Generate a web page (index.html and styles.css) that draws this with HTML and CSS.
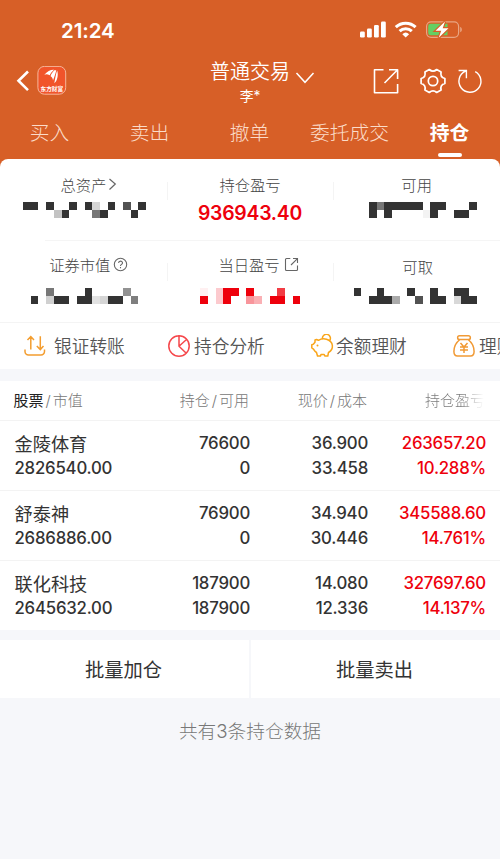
FILE: index.html
```html
<!DOCTYPE html>
<html lang="zh-CN">
<head>
<meta charset="utf-8">
<meta name="viewport" content="width=device-width, initial-scale=1">
<title>普通交易</title>
<link rel="stylesheet" href="styles.css">
</head>
<body>
<header class="header">
  <div class="status">
    <span class="clock">21:24</span>
    <svg class="status-icons" width="104" height="20" viewBox="0 0 104 20">
      <g fill="#fff">
        <rect x="0" y="11.5" width="4.8" height="6" rx="1.2"/><rect x="7" y="8.5" width="4.8" height="9" rx="1.2"/>
        <rect x="14" y="5" width="4.8" height="12.5" rx="1.2"/><rect x="21" y="1.5" width="4.8" height="16" rx="1.2"/>
      </g>
      <g fill="none" stroke="#fff" stroke-width="3">
        <path d="M35.8 7.2a14.2 14.2 0 0 1 19.8 0"/><path d="M39.6 11.1a8.8 8.8 0 0 1 12.2 0"/>
      </g>
      <path d="M42.3 14.2a5 5 0 0 1 6.800 0L45.700 17.500z" fill="#fff"/>
      <rect x="66.600" y="1.800" width="32" height="15.500" rx="4.500" fill="none" stroke="#e9a583" stroke-width="1.200"/>
      <path d="M100.200 7v5.200c2.200-.6 2.200-4.600 0-5.200z" fill="#e9a583"/>
      <path d="M70.500 3.800H87.500V15.200H70.500a2.300 2.300 0 0 1-2.300-2.300V6.100a2.300 2.300 0 0 1 2.300-2.300z" fill="#65cf63"/>
      <path d="M85 1.500 75.500 10.800h5.700L78.700 17.800 88.500 8.200h-5.800z" fill="#fff" stroke="#d75f27" stroke-width="2.400" paint-order="stroke"/>
    </svg>
  </div>
  <div class="nav">
    <svg class="back" width="14" height="24" viewBox="0 0 14 24"><path d="M12 2.500 2.500 11.800 12 21.100" fill="none" stroke="#fff" stroke-width="2.600"/></svg>
    <svg class="logo" width="30" height="30" viewBox="0 0 30 30">
      <rect x=".9" y=".4" width="27.800" height="27.800" rx="6.500" fill="#f1542a" stroke="#f6b79b" stroke-width="1"/>
      <path d="M7.300 8.800C10 5.400 14 3.400 17 3.700 15 5.600 13.300 7.500 12.700 9.300 10.500 8 8.600 8.200 7.300 8.800z" fill="#fff"/>
      <path d="M17.800 4C15.500 6 13.800 8.300 13.600 10.300 15 11.300 16 12.700 16 14.400 17.500 11 18.400 7 19.300 4.400z" fill="#fff"/>
      <path d="M20.200 4.500C18.800 8 18.200 12.500 17.300 17.300 20 15.200 21.700 9.600 20.200 4.500z" fill="#fff"/>
      <text x="14.800" y="24.700" text-anchor="middle" class="logo-text">东方财富</text>
    </svg>
    <div class="title"><div class="title-main">普通交易</div><div class="title-sub">李*</div></div>
    <svg class="chev" width="20" height="14" viewBox="0 0 20 14"><path d="M1.500 2 10 11.300 18.500 2" fill="none" stroke="#fff" stroke-width="1.500"/></svg>
    <svg class="share" width="28" height="28" viewBox="0 0 28 28"><path d="M11.500 2.700H2.500V25.800H25.600V17M17 2.700H25.600V12M25.300 3 12.500 16" fill="none" stroke="#fff" stroke-width="1.600" stroke-linejoin="round"/></svg>
    <svg class="gear" width="28" height="28" viewBox="0 0 28 28"><g fill="none" stroke="#fff" stroke-width="1.700"><circle cx="14" cy="14" r="4.700"/><path d="M10.300 2.500Q14 5.900 17.700 2.500L22.100 5Q20.800 10.200 25.900 11.500V16.500Q20.800 17.800 22.100 23L17.700 25.500Q14 22.100 10.300 25.500L5.900 23Q7.200 17.800 2.100 16.500V11.500Q7.200 10.200 5.900 5Z" stroke-linejoin="round"/></g></svg>
    <svg class="reload" width="26" height="28" viewBox="0 0 26 28"><path d="M18.200 4.600A11 11 0 1 1 8.500 4.200M1.600 3.500H9.400V11.200" fill="none" stroke="#fff" stroke-width="1.400"/></svg>
  </div>
  <nav class="tabs">
    <span class="tab">买入</span><span class="tab">卖出</span><span class="tab">撤单</span><span class="tab">委托成交</span><span class="tab active">持仓</span>
  </nav>
</header>

<section class="summary">
  <div class="stats">
    <div class="stat">
      <div class="label assets">总资产<svg width="9" height="14" viewBox="0 0 9 14"><path d="M1.500 2 7.300 7 1.500 12.500" fill="none" stroke="#666" stroke-width="1.200"/></svg></div>
      <svg class="mosaic" viewBox="0 0 21.667 2" preserveAspectRatio="none" fill="#333"><path d="M3 0h2v1h-2zM6 0h1v1h-1zM8 1h1v1h-1zM9 0h1v1h-1zM11 0h1v1h-1zM13 1h1v1h-1zM14 0h1v1h-1zM17 1h1v1h-1zM18 0h1v1h-1z"/><path fill="#c3c3c3" d="M7 1h1v1h-1z"/><path fill="#d6d6d6" d="M12 0h1v1h-1z"/><path fill="#777" d="M12 1h1v1h-1z"/><path fill="#525252" d="M16 0h1v1h-1z"/></svg>
    </div>
    <div class="stat"><div class="label">持仓盈亏</div><div class="profit">936943.40</div></div>
    <div class="stat"><div class="label">可用</div>
      <svg class="mosaic" viewBox="43.333 0 21.667 2" preserveAspectRatio="none" fill="#333"><path d="M48 0h1v2h-1zM50 0h5v1h-4v1h-1zM56 0h2v1h-1v1h-1zM59 1h2v1h-2zM61 0h1v1h-1z"/><path fill="#777" d="M49 0h1v1h-1z"/><path fill="#f3f3f3" d="M55 1h1v1h-1z"/></svg>
    </div>
  </div>
  <div class="stats second">
    <div class="stat">
      <div class="label value">证券市值<svg class="help" width="15" height="15" viewBox="0 0 15 15"><g fill="none" stroke="#666" stroke-width="1.100"><circle cx="7.500" cy="7.500" r="6.200"/><path d="M5.600 6.100c0-2.600 3.900-2.500 3.900-.2 0 1.500-2 1.500-2 3.100M7.500 10v1.300"/></g></svg></div>
      <svg class="mosaic" viewBox="0 0 21.667 2" preserveAspectRatio="none" fill="#333"><path d="M4 1h1v1h-1zM7 1h2v1h-2zM10 1h1v-1h1v2h-2zM14 1h2v1h-2z"/><path fill="#777" d="M6 0h1v1h-1z"/><path fill="#d0d0d0" d="M6 1h1v1h-1z"/><path fill="#e2e2e2" d="M12 1h1v1h-1z"/><path fill="#d5d5d5" d="M13 1h1v1h-1z"/><path fill="#929292" d="M16 0h1v1h-1z"/><path fill="#7e7e7e" d="M17 1h1v1h-1z"/></svg>
    </div>
    <div class="stat">
      <div class="label today">当日盈亏<svg class="ext" width="15" height="15" viewBox="0 0 15 15"><path d="M6.300 1.500H2.500a1 1 0 0 0-1 1V12.500a1 1 0 0 0 1 1H12.500a1 1 0 0 0 1-1V8.500M9 1.500H13.500V6M13.200 1.800 7 8" fill="none" stroke="#666" stroke-width="1.100"/></svg></div>
      <svg class="mosaic" viewBox="21.667 0 21.667 2" preserveAspectRatio="none" fill="#ee000c"><path d="M26 1h1v1h-1zM29 0h2v1h-1v1h-1zM32 0h1v1h-1zM35 1h2v1h-2zM38 1h1v1h-1z"/><path fill="#fff0f1" d="M26 0h1v1h-1z"/><path fill="#fccace" d="M28 0h1v2h-1z"/><path fill="#f8959b" d="M32 1h1v1h-1z"/><path fill="#fab0b4" d="M33 1h1v1h-1z"/><path fill="#f23c44" d="M36 0h1v1h-1z"/></svg>
    </div>
    <div class="stat"><div class="label low">可取</div>
      <svg class="mosaic" viewBox="43.333 0 21.667 2" preserveAspectRatio="none" fill="#333"><path d="M46 0h1v1h-1zM48 1h1v-1h1v1h1v1h-3zM53 0h1v1h-1zM56 0h1v1h1v1h-2zM59 0h2v1h1v1h-2v-1h-1z"/><path fill="#aaa" d="M51 1h1v1h-1z"/><path fill="#525252" d="M54 1h1v1h-1z"/><path fill="#d8d8d8" d="M59 1h1v1h-1z"/></svg>
    </div>
  </div>
  <div class="tools">
    <div class="tool"><svg width="24" height="24" viewBox="0 0 24 24"><path d="M2 15.500V17.500a3.500 3.500 0 0 0 3.500 3.500H18a3.500 3.500 0 0 0 3.500-3.500V15.500M7.800 15.500V2.800M4.500 6 7.800 2.500 11 6M17.300 2.300V15.300M13.800 12 17.300 15.600 20.500 12" fill="none" stroke="#f39d2f" stroke-width="1.500"/></svg>银证转账</div>
    <div class="tool"><svg width="24" height="24" viewBox="0 0 24 24"><path d="M12 1.800a10.200 10.200 0 1 0 0 20.400 10.200 10.200 0 0 0 0-20.400V12.200L19 19M12 12.200 19.500 5.500" fill="none" stroke="#f5474b" stroke-width="1.500"/></svg>持仓分析</div>
    <div class="tool"><svg width="24" height="24" viewBox="0 0 24 24"><g fill="none" stroke="#f9a51a" stroke-width="1.500" stroke-linejoin="round"><path d="M6.500 5.500 8.500 6.300Q12 4 16.500 5.200C24 7.500 24 15.300 18.500 18.500L17.800 22H14.800L14.200 20.500H11L10.500 22H7.500L6.500 18.500Q4.500 17.200 3.500 15.200L1.800 14V10.800L3.500 10.100 5 8.300V6z"/><path d="M12.500 5.200A4 4 0 1 1 19.500 6.800"/></g><circle cx="7.500" cy="11.500" r="1" fill="#f9a51a"/></svg>余额理财</div>
    <div class="tool"><svg width="24" height="24" viewBox="0 0 24 24"><path d="M7.500 1.800H16.500a1.800 1.800 0 0 1 0 3.700H7.500a1.800 1.800 0 0 1 0-3.700zM8 5.500Q2 10 1.900 17.500 2 22 5.500 22H18.500Q22 22 22.100 17.500 22 10 16 5.500M8.500 9 12 13 15.500 9M12 13V19M8 13H16M8 16H16" fill="none" stroke="#f19a35" stroke-width="1.500"/></svg>理财</div>
  </div>
</section>

<section class="holdings">
  <div class="row head"><div class="first"><b>股票</b><i>/</i>市值</div><div>持仓<i>/</i>可用</div><div>现价<i>/</i>成本</div><div class="fade">持仓盈亏</div></div>
  <div class="row"><div><span class="name">金陵体育</span><span>2826540.00</span></div><div><span>76600</span><span>0</span></div><div><span>36.900</span><span>33.458</span></div><div class="red"><span>263657.20</span><span>10.288%</span></div></div>
  <div class="row"><div><span class="name">舒泰神</span><span>2686886.00</span></div><div><span>76900</span><span>0</span></div><div><span>34.940</span><span>30.446</span></div><div class="red"><span>345588.60</span><span>14.761%</span></div></div>
  <div class="row"><div><span class="name">联化科技</span><span>2645632.00</span></div><div><span>187900</span><span>187900</span></div><div><span>14.080</span><span>12.336</span></div><div class="red"><span>327697.60</span><span>14.137%</span></div></div>
</section>

<div class="actions"><div>批量加仓</div><div>批量卖出</div></div>
<footer class="count">共有3条持仓数据</footer>
</body>
</html>
```
FILE: styles.css
```css
* { box-sizing: border-box; }
body {
  margin: 0;
  width: 500px;
  height: 859px;
  overflow: hidden;
  background: #f6f7fa;
  color: #333;
  font-family: Inter, "Noto Sans CJK SC", sans-serif;
}
svg { display: block; flex: none; }

.header { height: 159px; background: #d75f27; color: #fff; }
.status { display: flex; justify-content: space-between; height: 60px; padding: 20px 36px 0 61px; }
.clock { font-size: 20.5px; line-height: 21px; font-weight: 600; letter-spacing: -.1px; }
.nav { display: flex; align-items: center; height: 41px; padding-left: 16px; }
.logo { margin-left: 7px; }
.logo-text { font: 700 5.6px "Noto Sans CJK SC", sans-serif; fill: #fff; }
.title { width: 80px; margin-left: 143px; text-align: center; }
.title-main { font-size: 20px; line-height: 24px; margin-top: 4px; white-space: nowrap; font-weight: 350; }
.title-sub { font-size: 13.800px; line-height: 20px; margin-top: 2px; }
.chev { margin: -6px 0 0 5px; }
.share { margin-left: 57px; }
.gear { margin-left: 19px; }
.reload { margin-left: 9.500px; }
.tabs { display: grid; grid-template-columns: repeat(5, 100px); height: 58px; }
.tab { display: flex; flex-direction: column; align-items: center; padding-top: 18px; font-size: 19.800px; line-height: 29px; font-weight: 300; color: #fbdcc9; white-space: nowrap; margin-left: -1px; }
.tab.active { color: #fff; font-weight: 700; }
.tab.active::after { content: ""; width: 24px; height: 4px; margin: 5px 0 0 1px; border-radius: 2px; background: #fff; }

.summary { height: 210px; background: linear-gradient(#d75f27 12px, #fff 12px); }
.stats { display: grid; grid-template-columns: repeat(3, 1fr); height: 81px; background: #fff; border-radius: 8px 8px 0 0; }
.stat { position: relative; padding-top: 14px; }
.stat + .stat::before { content: ""; position: absolute; left: 0; top: 23px; width: 1px; height: 18px; background: #f4f4f4; }
.label { display: flex; justify-content: center; align-items: center; height: 22px; font-size: 15.300px; font-weight: 300; color: #444; }
.label svg { margin-left: 2px; }
.label .help { margin-left: 3px; }
.label .ext { margin-left: 4px; }
.label.assets, .label.value { padding-left: 11px; }
.label.today { padding-left: 17px; }
.label.low { position: relative; top: 2px; left: 1px; }
.mosaic { width: 100%; height: 15.500px; margin-top: 7px; shape-rendering: crispEdges; }
.profit { margin-top: 6px; text-align: center; font-size: 19.400px; line-height: 24px; font-weight: 600; letter-spacing: -.25px; color: #ee000c; }
.second { height: 82px; border-radius: 0; background: linear-gradient(#f5f5f5, #f5f5f5) 45px 0 / 455px 1px no-repeat #fff; }
.second .stat { padding-top: 13px; }
.second .mosaic { margin-top: 13px; }
.tools { display: flex; gap: 43px; width: 500px; height: 47px; padding: 0 0 2px 23px; overflow: hidden; border-top: 1px solid #f4f4f4; background: #fff; }
.tool { display: flex; flex: none; align-items: center; gap: 7px; width: 101px; font-size: 17.700px; color: #555; white-space: nowrap; font-weight: 350; }
.tool svg { margin-top: 1px; }
.tool:nth-child(2) { gap: 3px; width: 100px; }
.tool:nth-child(3) { gap: 2px; width: 102px; }
.tool:nth-child(4) { gap: 3px; margin-left: -3px; }

.holdings { height: 249px; margin-top: 12px; background: #fff; }
.row { display: grid; grid-template-columns: 150px 85px 118px 118px; height: 70px; padding: 10px 14px 0 15px; border-bottom: 1px solid #f3f3f3; font-size: 16.800px; line-height: 24.500px; font-weight: 500; letter-spacing: -.22px; color: #333; text-align: right; }
.row:last-child { border: 0; height: 69px; }
.row > div:first-child { text-align: left; margin-left: -.5px; }
.row span { display: block; white-space: nowrap; }
.row .name { position: relative; top: 1px; font-size: 18.200px; font-weight: 400; letter-spacing: 0; }
.row .red { color: #ee000c; }
.row.head { height: 40px; padding: 8px 15px 0 14px; font-size: 15px; font-weight: 300; letter-spacing: 0; color: #777; }
.head b { font-weight: 400; color: #222; }
.head i { font-style: normal; margin: 0 2px; }
.fade { background: linear-gradient(90deg, #777 80%, #fff 99%); -webkit-background-clip: text; background-clip: text; color: transparent; }

.actions { display: grid; grid-template-columns: 1fr 1fr; gap: 2px; height: 58px; margin-top: 10px; }
.actions div { display: flex; align-items: center; justify-content: center; padding-right: 2px; background: #fff; font-size: 19.300px; color: #333; }
.count { margin-top: 20px; text-align: center; font-size: 18.700px; line-height: 27px; font-weight: 300; color: #777; }
```
